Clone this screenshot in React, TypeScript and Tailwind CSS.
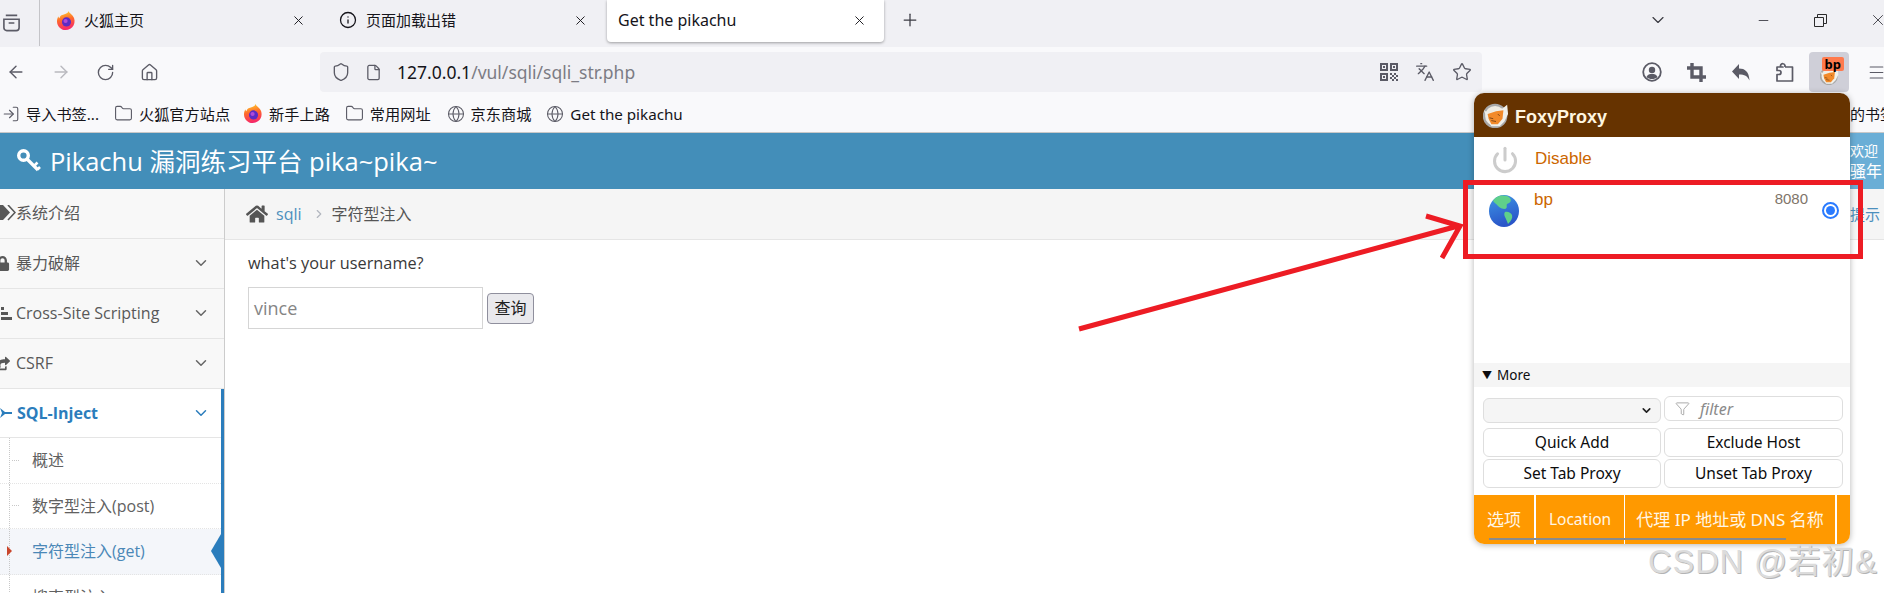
import React from "react";
import { ArrowLeft, ArrowRight, RotateCw, Home, Shield, File, Star, Languages, Menu, X, Plus, ChevronDown, Minus, Folder, Globe, Info, LogIn, Filter, Power, ChevronRight } from "lucide-react";
import { FaHome, FaLock, FaShareSquare } from "react-icons/fa";

const ui = "font-['Noto_Sans','Noto_Sans_CJK_SC',sans-serif]";
const page = "font-['Open_Sans','Noto_Sans_CJK_SC',sans-serif]";

const FirefoxLogo = ({ id, size = 19 }: { id: string; size?: number }) => (
  <svg width={size} height={size} viewBox="0 0 20 20" className="shrink-0">
    <defs>
      <linearGradient id={id} x1="0.3" y1="0" x2="0.5" y2="1">
        <stop offset="0" stopColor="#ffd12e" />
        <stop offset="0.45" stopColor="#ff6a2b" />
        <stop offset="1" stopColor="#f5246d" />
      </linearGradient>
    </defs>
    <path d="M12 0c.500 2 3 3 4.500 5 2.500 3 2.500 7 1 10-1.500 3-5 5-8.500 5-5 0-9-4-9-9 0-2 .5-4 1.500-5.500 0 1 .5 1.500 1 2C3.500 5 5 4 6.500 4 8 3 11.500 3 12 0z" fill={`url(#${id})`} />
    <circle cx="10" cy="11.500" r="4.800" fill="#5b2bc4" />
    <circle cx="9" cy="10.500" r="2.200" fill="#b04ad8" />
  </svg>
);

const QrIcon = () => (
  <svg width="18" height="18" viewBox="0 0 18 18" fill="#5b5b66">
    <path d="M0 0h8v8H0zM2 2v4h4V2zM10 0h8v8h-8zM12 2v4h4V2zM0 10h8v8H0zM2 12v4h4v-4z" fillRule="evenodd" />
    <path d="M3 3h2v2H3zM13 3h2v2h-2zM3 13h2v2H3zM10 10h2v2h-2zM14 10h2v2h-2zM12 12h2v2h-2zM16 12h2v2h-2zM10 14h2v2h-2zM14 14h2v2h-2zM12 16h2v2h-2zM16 16h2v2h-2z" />
  </svg>
);

const FoxFace = ({ size }: { size: number }) => (
  <svg width={size} height={size} viewBox="0 0 28 28" className="shrink-0">
    <circle cx="13" cy="15" r="12" fill="#f0ece2" stroke="#a8a8a8" strokeWidth="2.500" />
    <path d="M1 9l5 3 8-3 7-2 5-4 1 10-4 8-5 5H9l-4-6z" fill="#f0f0ea" />
    <path d="M5 13l9-3 8-1-1 9-5 6H9l-3-6z" fill="#f28a2a" />
    <path d="M7 17l4 1M9 20l5 1M16 13l2 2" stroke="#7a4314" strokeWidth="1" />
  </svg>
);

const EarthIcon = () => (
  <svg width="30" height="32" viewBox="0 0 30 32">
    <defs>
      <linearGradient id="sea" x1="0" y1="0" x2="0.3" y2="1">
        <stop offset="0" stopColor="#3d97e6" />
        <stop offset="1" stopColor="#2a55c8" />
      </linearGradient>
    </defs>
    <ellipse cx="15" cy="16" rx="15" ry="16" fill="url(#sea)" />
    <path d="M8 2c4-2 10-2 13 1 2 3 0 5-3 6-1 2 1 4-2 5-3 0-5-1-7-3C8 9 5 8 4 6c1-2 2-3 4-4z" fill="#5fd08a" />
    <path d="M16 17c3-1 6 1 7 3 1 3-1 6-4 9-1-3-2-5-3-7-1-2-1-4 0-5z" fill="#5fd08a" />
  </svg>
);

const ProfileIcon = () => (
  <svg width="20" height="20" viewBox="0 0 20 20" fill="none" stroke="#5b5b66" strokeWidth="1.800">
    <circle cx="10" cy="10" r="8.800" />
    <circle cx="10" cy="8" r="3.200" fill="#5b5b66" stroke="none" />
    <path d="M4.500 15c1-2.500 3-3 5.500-3s4.500.5 5.500 3c-1.500 1.500-3.500 2-5.500 2s-4-.5-5.500-2z" fill="#5b5b66" stroke="none" />
  </svg>
);

const CropIcon = () => (
  <svg width="19" height="19" viewBox="0 0 19 19" fill="none" stroke="#5b5b66" strokeWidth="3.400">
    <path d="M5 0v14h14M0 5h14v14" />
  </svg>
);

const ReplyIcon = () => (
  <svg width="18" height="17" viewBox="0 0 18 17" fill="#5b5b66">
    <path d="M7 0v4.500c6 0 10 3 10.500 12-2-4.500-5-6-10.500-6V15L0 7.500z" />
  </svg>
);

const PuzzleIcon = () => (
  <svg width="18" height="20" viewBox="0 0 18 20" fill="none" stroke="#5b5b66" strokeWidth="1.700" strokeLinejoin="round">
    <path d="M9 5V3.500a2.300 2.300 0 0 0-4.300-.5c-.3.800-.2 1.500.3 2H7v-.5M9 5h7.500v14H1v-6.500h2a2 2 0 0 0 0-4H1V5h6" />
  </svg>
);

const KeyIcon = () => (
  <svg width="26" height="26" viewBox="0 0 26 26" fill="none" stroke="#fff" className="shrink-0">
    <circle cx="7.500" cy="7.500" r="4.800" strokeWidth="3.400" />
    <path d="M11 11l11 11" strokeWidth="3.200" />
    <path d="M18 18l3.500-3.500M21.500 21.500l2.500-2.500" strokeWidth="2.600" />
  </svg>
);

const TagIcon = () => (
  <svg width="17" height="16" viewBox="0 0 17 16" fill="#585858" className="shrink-0">
    <path d="M0 0h4l7 7.500-7 7.500H0z" />
    <path d="M9 0l7 7.500L9 15" fill="none" stroke="#585858" strokeWidth="1.600" />
  </svg>
);

const ListIcon = () => (
  <svg width="11" height="13" viewBox="0 0 11 13" fill="#585858" className="mr-[4px] shrink-0">
    <path d="M0 0h3v3H0zM0 5h7v3H0zM0 10h11v3H0z" />
  </svg>
);

const Tab = ({ icon, title }: { icon: React.ReactNode; title: string }) => (
  <div className="flex h-[40px] w-[282px] shrink-0 items-center pr-[16px] pl-[17px] text-[15px] text-[#15141a]">
    <span className="flex w-[27px] shrink-0">{icon}</span>
    <span className="flex-1">{title}</span>
    <X size={15} strokeWidth={1.5} />
  </div>
);

const Bookmark = ({ icon, label, className }: { icon: React.ReactNode; label: string; className: string }) => (
  <div className={`flex items-center gap-[6px] text-[15.200px] whitespace-nowrap text-[#15141a] ${className}`}>
    {icon}
    <span>{label}</span>
  </div>
);

const SideRow = ({ icon, label, arrow = true }: { icon: React.ReactNode; label: string; arrow?: boolean }) => (
  <div className="flex h-[50px] shrink-0 items-center border-b border-[#e5e5e5] bg-[#f8f8f8] pr-[14px] pb-[1px] text-[16px] text-[#585858]">
    <span className="flex w-[16px] shrink-0 justify-end overflow-hidden">{icon}</span>
    <span className="flex-1">{label}</span>
    {arrow && <ChevronDown size={18} strokeWidth={2} className="text-[#666]" />}
  </div>
);

const SubRow = ({ label, active = false, last = false }: { label: string; active?: boolean; last?: boolean }) => (
  <div className={`relative flex h-[45.500px] shrink-0 items-center pl-[32px] text-[16px] ${last ? "" : "border-b border-dotted border-[#e4e4e4]"} ${active ? "bg-[#f4f6fa] text-[#4b88b7]" : "text-[#616161]"}`}>
    <span className="absolute top-0 bottom-0 left-[9px] border-l border-dotted border-[#c8c8c8]" />
    {active ? (
      <span className="absolute left-[7px] h-0 w-0 border-y-[5px] border-l-[5px] border-y-transparent border-l-[#c9452b]" />
    ) : (
      <span className="absolute left-[12px] w-[7px] border-t border-dotted border-[#c8c8c8]" />
    )}
    {label}
    {active && <span className="absolute right-0 h-0 w-0 border-y-[17px] border-r-[10px] border-y-transparent border-r-[#2b7dbc]" />}
  </div>
);

const PopupButton = ({ label }: { label: string }) => (
  <button className="h-[29px] rounded-[6px] border border-[#dedede] bg-white text-[15.500px] text-[#0c0c0d]">{label}</button>
);

export default function App() {
  return (
    <div className="relative h-[593px] w-[1884px] overflow-hidden bg-white">
      {/* tab strip */}
      <div className={`flex h-[47px] items-start bg-[#f0f0f4] ${ui}`}>
        <div className="flex h-[46px] w-[40px] shrink-0 items-center justify-center border-r border-[#c4c4c8] pr-[18px] pl-[2px]">
          <svg width="20" height="20" viewBox="0 0 20 20" fill="none" stroke="#5b5b66" strokeWidth="1.700">
            <path d="M4 2h12M2 6h16v9a3 3 0 0 1-3 3H5a3 3 0 0 1-3-3zM7 10h6" />
          </svg>
        </div>
        <Tab icon={<FirefoxLogo id="fx1" />} title="火狐主页" />
        <Tab icon={<Info size={18} strokeWidth={1.7} />} title="页面加载出错" />
        <div className="ml-[3px] flex h-[42px] w-[277px] shrink-0 items-center rounded-b-[4px] bg-white pr-[17px] pb-[2px] pl-[11px] text-[16px] text-[#15141a] shadow-[0_1px_3px_rgba(0,0,0,0.35)]">
          <span className="flex-1">Get the pikachu</span>
          <X size={15} strokeWidth={1.5} />
        </div>
        <div className="ml-[16px] flex h-[40px] items-center">
          <Plus size={20} strokeWidth={1.5} className="text-[#3a3a42]" />
        </div>
        <div className="ml-auto flex h-[40px] items-center text-[#3a3a42]">
          <ChevronDown size={20} strokeWidth={1.4} />
          <Minus size={15} strokeWidth={1.4} className="ml-[88px]" />
          <svg width="13" height="13" viewBox="0 0 13 13" fill="none" stroke="#2a2a2a" className="ml-[43px]">
            <path d="M.5 3.500h9v9h-9zM3.500 3.500v-3h9v9h-3" />
          </svg>
          <X size={18} strokeWidth={1.2} className="mr-[-3px] ml-[42px]" />
        </div>
      </div>

      {/* nav bar */}
      <div className={`flex h-[46px] items-center bg-[#f9f9fb] pt-[4px] text-[#5b5b66] ${ui}`}>
        <div className="flex w-[320px] shrink-0 items-center pl-[6px]">
          <ArrowLeft size={20} strokeWidth={1.7} />
          <ArrowRight size={20} strokeWidth={1.7} className="ml-[25px] text-[#b9b9bf]" />
          <RotateCw size={19} strokeWidth={1.7} className="ml-[25px]" />
          <Home size={19} strokeWidth={1.7} className="ml-[25px]" />
        </div>
        <div className="flex h-[40px] w-[1162px] shrink-0 items-center rounded-[4px] bg-[#f0f0f4] pr-[10px] pl-[11px]">
          <Shield size={20} strokeWidth={1.6} />
          <File size={17} strokeWidth={1.8} className="ml-[14px]" />
          <span className="ml-[15px] text-[17.500px] text-[#15141a]">
            127.0.0.1<span className="text-[#7c7c84]">/vul/sqli/sqli_str.php</span>
          </span>
          <span className="ml-auto flex items-center gap-[17px]">
            <QrIcon />
            <Languages size={20} strokeWidth={1.6} />
            <Star size={20} strokeWidth={1.6} />
          </span>
        </div>
        <div className="ml-[160px] flex items-center">
          <ProfileIcon />
          <span className="ml-[25px]"><CropIcon /></span>
          <span className="ml-[26px]"><ReplyIcon /></span>
          <span className="ml-[26px]"><PuzzleIcon /></span>
          <div className="relative ml-[15px] flex h-[40px] w-[40px] items-center justify-center rounded-[4px] bg-[#cfcfd8] pt-[6px]">
            <FoxFace size={19} />
            <span className="absolute top-[5px] right-[5px] rounded-[2px] bg-[#ff7a4d] px-[3px] text-[13px] leading-[14px] font-bold text-black">bp</span>
          </div>
          <Menu size={19} strokeWidth={1.4} className="ml-[18px]" />
        </div>
      </div>

      {/* bookmarks */}
      <div className={`flex h-[40px] items-center border-b border-[#c8c8c8] bg-[#f9f9fb] pt-[3px] ${ui}`}>
        <Bookmark className="ml-[2px]" icon={<LogIn size={18} strokeWidth={1.5} className="text-[#5b5b66]" />} label="导入书签..." />
        <Bookmark className="ml-[15px]" icon={<Folder size={19} strokeWidth={1.4} className="text-[#5b5b66]" />} label="火狐官方站点" />
        <Bookmark className="ml-[14px]" icon={<FirefoxLogo id="fx2" />} label="新手上路" />
        <Bookmark className="ml-[15px]" icon={<Folder size={19} strokeWidth={1.4} className="text-[#5b5b66]" />} label="常用网址" />
        <Bookmark className="ml-[16px]" icon={<Globe size={18} strokeWidth={1.4} className="text-[#5b5b66]" />} label="京东商城" />
        <Bookmark className="ml-[15px]" icon={<Globe size={18} strokeWidth={1.4} className="text-[#5b5b66]" />} label="Get the pikachu" />
        <span className="ml-auto w-[34px] overflow-hidden text-[15px] whitespace-nowrap text-[#15141a]">的书签</span>
      </div>

      {/* pikachu header */}
      <div className={`flex h-[56px] items-center bg-[#438eb9] text-white ${page}`}>
        <span className="ml-[16px]"><KeyIcon /></span>
        <span className="ml-[8px] text-[25.500px]">Pikachu 漏洞练习平台 pika~pika~</span>
        <div className="ml-auto flex h-full w-[34px] flex-col justify-center overflow-hidden bg-[#6aaed6] leading-[21px] whitespace-nowrap">
          <span className="text-[14px]">欢迎</span>
          <span className="text-[16px]">骚年</span>
        </div>
      </div>

      {/* page body */}
      <div className={`flex ${page}`}>
        <div className="flex h-[404px] w-[225px] shrink-0 flex-col overflow-hidden border-r border-[#ccc]">
          <SideRow icon={<TagIcon />} label="系统介绍" arrow={false} />
          <SideRow icon={<FaLock size={15} className="mr-[6px] shrink-0 text-[#585858]" />} label="暴力破解" />
          <SideRow icon={<ListIcon />} label="Cross-Site Scripting" />
          <SideRow icon={<FaShareSquare size={15} className="mr-[6px] shrink-0" />} label="CSRF" />
          <div className="flex min-h-0 flex-1 flex-col border-r-[3px] border-[#2b7dbc]">
            <div className="flex h-[49px] shrink-0 items-center border-b border-[#e5e5e5] bg-white pr-[11px] pb-[1px] text-[16px] font-bold text-[#2b7dbc]">
              <svg width="12" height="12" viewBox="0 0 12 12" className="shrink-0" fill="#2b7dbc"><path d="M0 1l5 4h7v2H5l-5 4 2-5z" /></svg>
              <span className="ml-[5px] flex-1">SQL-Inject</span>
              <ChevronDown size={18} strokeWidth={2} />
            </div>
            <SubRow label="概述" />
            <SubRow label="数字型注入(post)" />
            <SubRow label="字符型注入(get)" active />
            <SubRow label="搜索型注入" last />
          </div>
        </div>

        <div className="min-w-0 flex-1">
          <div className="flex h-[51px] items-center border-b border-[#e5e5e5] bg-[#f5f5f5] pl-[21px] text-[16px]">
            <FaHome size={22} className="text-[#555]" />
            <span className="ml-[8px] text-[#4c8fbd]">sqli</span>
            <ChevronRight size={14} className="ml-[10px] text-[#b2b6bf]" />
            <span className="ml-[6px] text-[#555]">字符型注入</span>
            <span className="ml-auto w-[34px] overflow-hidden text-[15px] whitespace-nowrap text-[#4c8fbd]">提示</span>
          </div>
          <div className="pt-[13px] pl-[23px]">
            <p className="text-[16.300px] leading-[20px] text-[#393939]">what's your username?</p>
            <div className="mt-[14px] flex items-center">
              <div className="flex h-[42px] w-[235px] items-center border border-[#d5d5d5] pl-[5px] text-[18px] text-[#858585]">vince</div>
              <button className="ml-[4px] h-[31px] w-[47px] rounded-[4px] border border-[#8f8f9d] bg-[#e9e9ed] text-[16px] text-[#222]">查询</button>
            </div>
          </div>
        </div>
      </div>

      {/* FoxyProxy popup */}
      <div className="absolute top-[93px] left-[1474px] flex h-[451px] w-[376px] flex-col overflow-hidden rounded-[10px] bg-white font-['Liberation_Sans','Noto_Sans_CJK_SC',sans-serif] shadow-[0_1px_6px_rgba(0,0,0,0.3)]">
        <div className="flex h-[44px] shrink-0 items-center bg-[#663300] pl-[9px] text-[18px] font-bold text-[#fff6e0]">
          <FoxFace size={26} />
          <span className="mt-[4px] ml-[6px]">FoxyProxy</span>
        </div>
        <div className="flex h-[43px] shrink-0 pl-[17px]">
          <Power size={28} strokeWidth={2.600} className="mt-[9px] text-[#cccccc]" />
          <span className="mt-[9px] ml-[16px] text-[17px] text-[#cc6600]">Disable</span>
        </div>
        <div className="flex h-[183px] shrink-0 pt-[10px] pr-[11px] pl-[15px]">
          <span className="mt-[5px]"><EarthIcon /></span>
          <span className="ml-[15px] text-[17px] leading-[20px] text-[#cc6600]">bp</span>
          <span className="ml-auto text-[15px] leading-[18px] text-[#80756a]">8080</span>
          <span className="mt-[12px] ml-[14px] flex h-[17px] w-[17px] items-center justify-center rounded-full border-2 border-[#2a7bff]">
            <span className="h-[9px] w-[9px] rounded-full bg-[#2a7bff]" />
          </span>
        </div>
        <div className={`flex h-[24px] shrink-0 items-center bg-[#f5f5f5] pl-[8px] text-[13.500px] text-[#0c0c0d] ${ui}`}>
          <span className="mr-[5px] text-[10px]">▼</span>More
        </div>
        <div className={`grid grid-cols-[178px_179px] gap-x-[3px] pt-[9px] pl-[9px] ${ui}`}>
          <div className="mt-[2px] flex h-[25px] items-center justify-end rounded-[6px] border border-[#dedede] bg-[#f5f5f5] pr-[7px]">
            <ChevronDown size={13} strokeWidth={3} className="text-[#222]" />
          </div>
          <div className="flex h-[25px] items-center rounded-[6px] border border-[#dedede] bg-white pl-[10px] text-[16px] text-[#8a8a8a] italic">
            <Filter size={15} strokeWidth={1.300} className="text-[#999]" />
            <span className="ml-[10px]">filter</span>
          </div>
          <div className="mt-[5px] flex flex-col gap-[2px]">
            <PopupButton label="Quick Add" />
            <PopupButton label="Set Tab Proxy" />
          </div>
          <div className="mt-[5px] flex flex-col gap-[2px]">
            <PopupButton label="Exclude Host" />
            <PopupButton label="Unset Tab Proxy" />
          </div>
        </div>
        <div className={`relative mt-auto flex h-[49px] shrink-0 items-center bg-[#ff9900] text-[17px] text-[#fff6e6] ${ui}`}>
          <span className="flex h-full w-[62px] items-center justify-center border-r-2 border-white">选项</span>
          <span className="flex h-full w-[89px] items-center justify-center border-r border-white text-[15.500px]">Location</span>
          <span className="flex h-full w-[212px] items-center justify-center border-r-2 border-white whitespace-nowrap">代理 IP 地址或 DNS 名称</span>
          <span className="absolute bottom-[4px] left-[15px] h-[2px] w-[297px] bg-[#8b8b8b]" />
        </div>
      </div>

      {/* red annotation */}
      <div className="absolute top-[180px] left-[1463px] h-[79px] w-[400px] border-[5px] border-[#ed1c24]" />
      <svg className="absolute top-0 left-0" width="1884" height="593" viewBox="0 0 1884 593" fill="none" stroke="#ed1c24" strokeWidth="5">
        <path d="M1079 329L1458 226M1426 216L1460 226L1442 258" />
      </svg>

      {/* watermark */}
      <span className="absolute top-[543px] left-[1648px] font-['Liberation_Sans','Noto_Sans_CJK_SC',sans-serif] text-[32.500px] leading-[38px] tracking-[1px] whitespace-nowrap text-[#dcdcdc] [text-shadow:1px_1px_0_#b4b4b4]">CSDN @若初&amp;</span>
    </div>
  );
}
